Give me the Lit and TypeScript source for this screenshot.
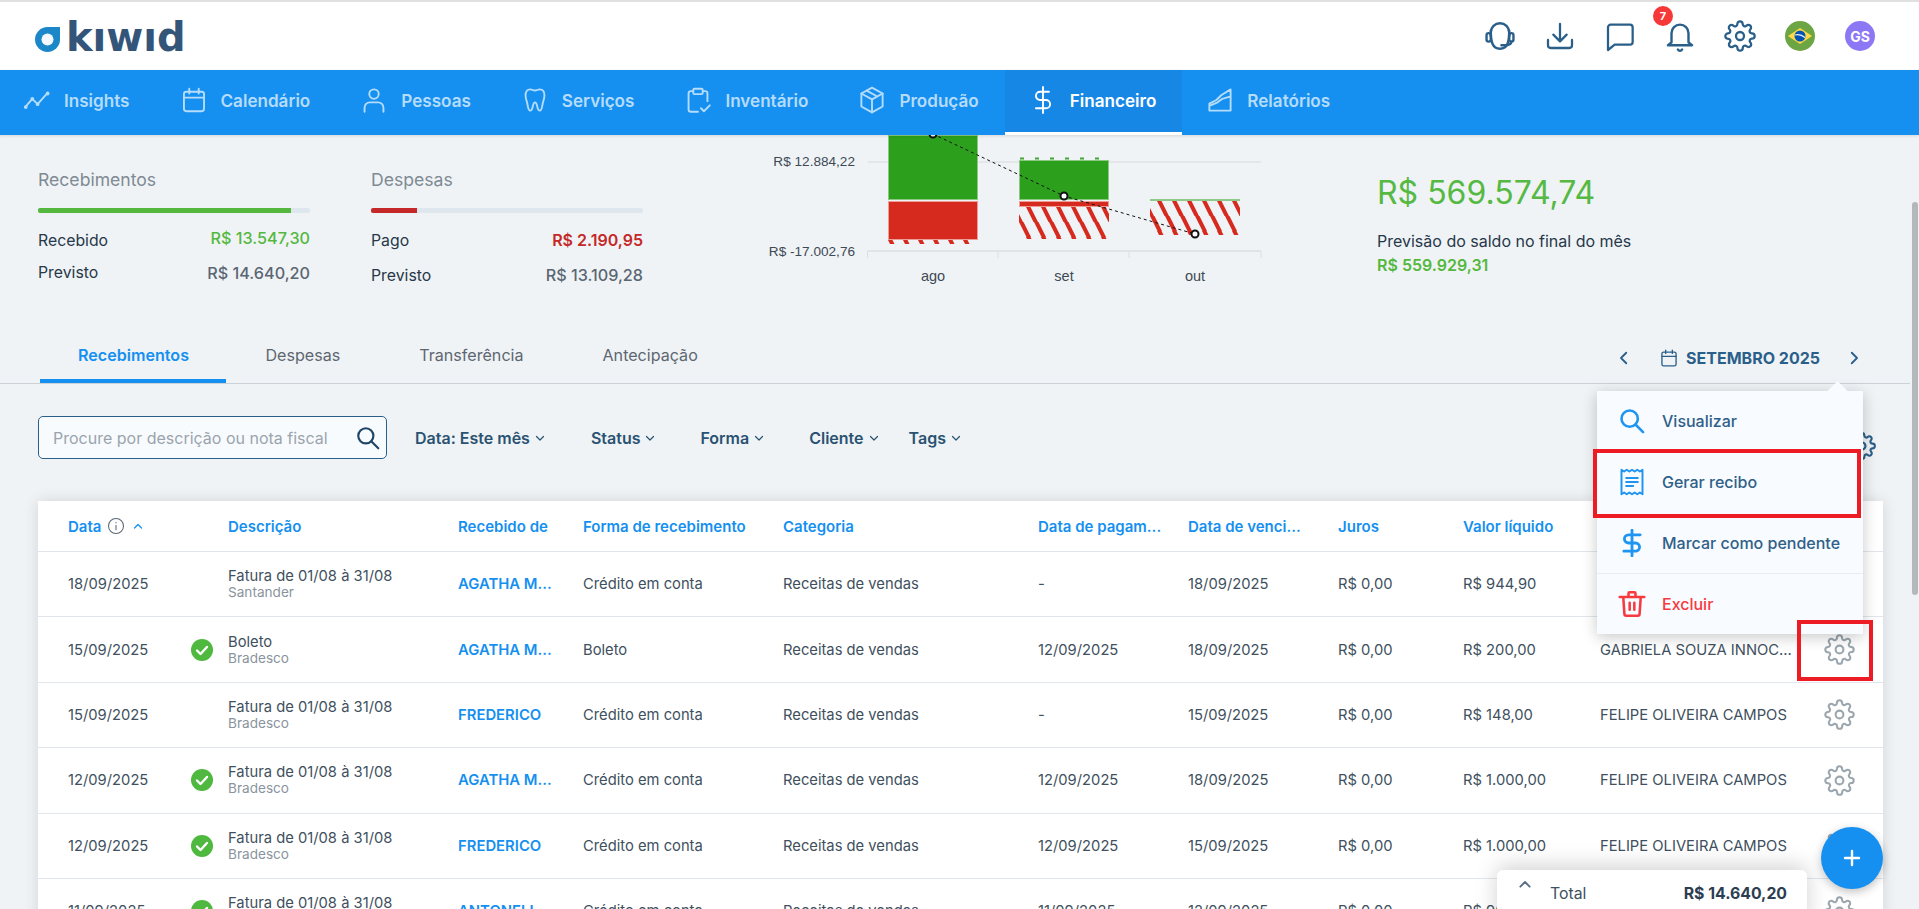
import { LitElement, html, css, svg } from "lit";
import { customElement } from "lit/decorators.js";

const ic = (cls: string, body: unknown, vb = "0 0 24 24") =>
  html`<svg class="ic ${cls}" viewBox=${vb} fill="none" stroke="currentColor" stroke-width="1.6" stroke-linecap="round" stroke-linejoin="round">${body}</svg>`;

const gearPaths = svg`<circle cx="12" cy="12" r="3"/><path d="M19.4 15a1.65 1.65 0 0 0 .33 1.82l.06.06a2 2 0 0 1 0 2.83 2 2 0 0 1-2.83 0l-.06-.06a1.65 1.65 0 0 0-1.82-.33 1.65 1.65 0 0 0-1 1.51V21a2 2 0 0 1-2 2 2 2 0 0 1-2-2v-.09A1.65 1.65 0 0 0 9 19.4a1.65 1.65 0 0 0-1.82.33l-.06.06a2 2 0 0 1-2.83 0 2 2 0 0 1 0-2.83l.06-.06a1.65 1.65 0 0 0 .33-1.82 1.65 1.65 0 0 0-1.51-1H3a2 2 0 0 1-2-2 2 2 0 0 1 2-2h.09A1.65 1.65 0 0 0 4.6 9a1.65 1.65 0 0 0-.33-1.82l-.06-.06a2 2 0 0 1 0-2.83 2 2 0 0 1 2.83 0l.06.06a1.65 1.65 0 0 0 1.82.33H9a1.65 1.65 0 0 0 1-1.51V3a2 2 0 0 1 2-2 2 2 0 0 1 2 2v.09a1.65 1.65 0 0 0 1 1.51 1.65 1.65 0 0 0 1.82-.33l.06-.06a2 2 0 0 1 2.83 0 2 2 0 0 1 0 2.83l-.06.06a1.65 1.65 0 0 0-.33 1.82V9a1.65 1.65 0 0 0 1.51 1H21a2 2 0 0 1 2 2 2 2 0 0 1-2 2h-.09a1.65 1.65 0 0 0-1.51 1z"/>`;

const calPaths = svg`<rect x="3.5" y="5" width="17" height="16.5" rx="2"/><path d="M3.5 10h17M8 2.5v4M16 2.5v4"/>`;

const navItems = [
  { t: "Insights", i: svg`<path d="M2 18l6-7 4.5 4.5L21 6"/><circle cx="2.5" cy="18" r=".8"/><circle cx="8" cy="11" r=".8"/><circle cx="12.5" cy="15.5" r=".8"/><circle cx="21" cy="6.5" r=".8"/>` },
  { t: "Calendário", i: calPaths },
  { t: "Pessoas", i: svg`<circle cx="12" cy="7" r="4"/><path d="M4 22v-3.5A4.5 4.5 0 0 1 8.500 14h7a4.5 4.5 0 0 1 4.500 4.500V22"/>` },
  { t: "Serviços", i: svg`<path d="M8 3c1.700 0 2.500 1 4 1s2.300-1 4-1c2.800 0 4 2.200 4 5 0 3-1 4.500-1.500 7-.5 3-.8 6-2.500 6s-1.800-2.200-2.200-4c-.3-1.300-.8-3-1.800-3s-1.500 1.700-1.800 3c-.4 1.800-.5 4-2.200 4s-2-3-2.500-6C5 12.500 4 11 4 8c0-2.800 1.200-5 4-5z"/>` },
  { t: "Inventário", i: svg`<path d="M8 4.500H6a2 2 0 0 0-2 2V20a2 2 0 0 0 2 2h6M16 4.500h2a2 2 0 0 1 2 2V13"/><rect x="8" y="2.500" width="8" height="4.500" rx="1"/><path d="M14.500 19l2.500 2.500 5-5"/>` },
  { t: "Produção", i: svg`<path d="M12 1.500l9 5v11l-9 5-9-5v-11z"/><path d="M3 6.500l9 5 9-5M12 11.500v11M7.500 4l9 5"/>` },
  { t: "Financeiro", i: svg`<path d="M12 1v22M17 5H9.500a3.500 3.500 0 0 0 0 7h5a3.500 3.500 0 0 1 0 7H6"/>`, active: true },
  { t: "Relatórios", i: svg`<path d="M3 21h18V3M3 21v-6l6-3 4-4 8-5M3 17l7-3 4-3 7-2"/>` },
];

type Row = [string, boolean, string, string, string, string, string, string, string, string, string];
const F = "Fatura de 01/08 à 31/08", C = "Crédito em conta", FE = "FELIPE OLIVEIRA CAMPOS";
const rows: Row[] = [
  ["18/09/2025", false, F, "Santander", "AGATHA M...", C, "-", "18/09/2025", "R$ 944,90", FE, ""],
  ["15/09/2025", true, "Boleto", "Bradesco", "AGATHA M...", "Boleto", "12/09/2025", "18/09/2025", "R$ 200,00", "GABRIELA SOUZA INNOC...", ""],
  ["15/09/2025", false, F, "Bradesco", "FREDERICO", C, "-", "15/09/2025", "R$ 148,00", FE, ""],
  ["12/09/2025", true, F, "Bradesco", "AGATHA M...", C, "12/09/2025", "18/09/2025", "R$ 1.000,00", FE, ""],
  ["12/09/2025", true, F, "Bradesco", "FREDERICO", C, "12/09/2025", "15/09/2025", "R$ 1.000,00", FE, ""],
  ["11/09/2025", true, F, "Bradesco", "ANTONELL...", C, "11/09/2025", "12/09/2025", "R$ 900,00", FE, ""],
];

@customElement("app-root")
export class AppRoot extends LitElement {
  static styles = css`
    :host { display: block; position: relative; height: 909px; overflow: hidden; background: #f0f3f5; font-family: Inter, "Liberation Sans", sans-serif; color: #2c3e50; }
    .ic { display: block; flex: none; width: 24px; height: 24px; }
    .strip { height: 2px; background: #e0e0e0; }
    .head { height: 68px; background: #fff; display: flex; align-items: center; justify-content: space-between; padding-right: 29px; }
    .logo { display: flex; align-items: flex-end; gap: 6px; margin-left: 35px; padding-top: 2px; }
    .logo svg { width: 25px; height: 25px; display: block; margin-bottom: 1px; }
    .logo span { font-family: "DejaVu Sans", sans-serif; font-weight: 700; font-size: 40px; line-height: 31px; color: #34557a; }
    .tools { display: flex; align-items: center; color: #2a5f8a; height: 34px; }
    .slot { width: 60px; display: flex; justify-content: center; align-items: center; position: relative; }
    .tool { width: 32px; height: 32px; stroke-width: 1.700; }
    .tool.lg { width: 34px; height: 34px; }
    .badge { position: absolute; left: 3px; top: -13px; width: 20px; height: 20px; border-radius: 50%; background: #f73838; color: #fff; font-size: 11px; font-weight: 700; display: grid; place-items: center; }
    .flag { width: 30px; height: 30px; }
    .avatar { width: 30px; height: 30px; border-radius: 50%; background: #8c78f5; color: #fff; font-size: 14px; font-weight: 700; display: grid; place-items: center; }
    .nav { height: 65px; background: #1590f0; display: flex; margin-left: -1px; position: relative; z-index: 2; box-shadow: 0 1px 3px rgba(0,0,0,.12); }
    .nav a { display: flex; align-items: center; gap: 15px; padding: 0 26px 5px; color: #b5dcfb; font-size: 17.100px; font-weight: 600; box-sizing: border-box; }
    .nav a.on { background: #1787e6; color: #fff; border-bottom: 3px solid #fff; padding-bottom: 2px; }
    .nav .ic { transform: scale(1.18); }
    .body { display: flex; height: 774px; }
    .main { flex: 1; min-width: 0; }
    .sbar { width: 9px; padding-left: 2px; box-sizing: border-box; }
    .thumb { margin-top: 67px; height: 393px; width: 6px; border-radius: 3px; background: #b3b8bb; }
    .stats { height: 204px; display: flex; padding-left: 38px; }
    .stat { width: 272px; padding-top: 35px; box-sizing: border-box; }
    .stat + .stat { margin-left: 61px; }
    .st { font-size: 17.600px; line-height: 20px; color: #7e8a94; }
    .bar { height: 5px; margin-top: 18px; background: #dfe7ee; border-radius: 2px; overflow: hidden; }
    .fill { height: 100%; }
    .sr { display: flex; justify-content: space-between; align-items: center; font-size: 15.800px; line-height: 20px; margin-top: 12px; color: #26384a; }
    .sr:nth-of-type(3) { margin-top: 18px; }
    .sr b { font-weight: 500; font-size: 16.200px; color: #5a6673; }
    .sr b.g { color: #54b83f; }
    .sr b.r { color: #c42828; font-weight: 600; font-size: 16px; }
    .up { margin-top: -6px; }
    .despesas .sr { margin-top: 15px; }
    .despesas .sr:nth-of-type(3) { margin-top: 18px; }
    .despesas .sr b { margin-top: -2px; }
    .chart { width: 520px; height: 165px; margin-left: 117px; display: block; flex: none; }
    .chart text { font-family: "Liberation Sans", Arial, sans-serif; fill: #3d4a55; }
    .bal { margin-left: 97px; padding-top: 37px; }
    .bal .big { font-size: 32px; line-height: 42px; color: #55b944; font-weight: 400; }
    .bal .lbl { font-size: 16px; line-height: 20px; margin-top: 17px; color: #26384a; }
    .bal .sub { font-size: 16px; line-height: 20px; margin-top: 4px; color: #54b83f; font-weight: 600; }
    .tabs { height: 44px; display: flex; align-items: stretch; border-bottom: 1px solid #ccd3d8; padding-left: 40px; }
    .tab { padding: 0 39.500px 13px; font-size: 16.100px; color: #5d6771; display: flex; align-items: center; box-sizing: border-box; height: 44px; }
    .tab.on { color: #1590f0; font-weight: 600; border-bottom: 4px solid #1590f0; padding: 0 37px 9px 38px; }
    .month { margin-left: auto; display: flex; align-items: center; color: #2a5f8a; padding-bottom: 6px; height: 38px; padding-right: 47px; }
    .month .chev { width: 18px; height: 18px; stroke-width: 2.400; }
    .month .cal { width: 20px; height: 20px; margin-left: 26px; }
    .month span { font-size: 16px; font-weight: 700; margin: 0 25px 0 7px; }
    .filters { height: 43px; margin-top: 32px; display: flex; align-items: center; padding-left: 38px; position: relative; }
    .search { width: 349px; height: 43px; box-sizing: border-box; border: 1px solid #2a5f8a; border-radius: 5px; background: #f8fbfd; display: flex; align-items: center; justify-content: space-between; padding: 0 5px 0 14px; color: #9aa4ad; font-size: 16px; }
    .search .ic { color: #1f4668; width: 26px; height: 26px; stroke-width: 2; }
    .fl { display: flex; align-items: center; gap: 4px; font-size: 16px; font-weight: 600; color: #2a5272; }
    .fl .ic { width: 12px; height: 12px; stroke-width: 2.400; }
    .fl1 { margin-left: 28px; } .fl2 { margin-left: 45px; } .fl3 { margin-left: 44px; } .fl4 { margin-left: 44px; } .fl5 { margin-left: 29px; }
    .fgear { position: absolute; left: 1848px; top: 16px; width: 28px; height: 28px; stroke-width: 1.800; color: #2a5f8a; }
    .card { margin: 42px 27px 0 38px; background: #fff; box-shadow: 0 0 14px rgba(0,0,0,.12); height: 500px; overflow: hidden; }
    .row { display: grid; grid-template-columns: 30px 118px 42px 230px 125px 200px 255px 150px 150px 125px 137px 210px 1fr; align-items: center; height: 65.400px; box-sizing: border-box; border-bottom: 1px solid #e0e6eb; font-size: 14.750px; color: #40505e; }
    .row > * { white-space: nowrap; }
    .row.hd { height: 51px; color: #1590f0; font-weight: 600; font-size: 15px; }
    .hdata { grid-column: 2 / 4; display: flex; align-items: center; gap: 6px; }
    .hdata .ic { width: 18px; height: 18px; color: #5a6673; stroke-width: 1.400; }
    .hdata .car { width: 12px; height: 12px; color: #1590f0; stroke-width: 2.600; margin-left: 1px; }
    .c2 { grid-column: 4; } .c3 { grid-column: 5; } .c4 { grid-column: 6; } .c5 { grid-column: 7; } .c6 { grid-column: 8; } .c7 { grid-column: 9; } .c8 { grid-column: 10; } .c9 { grid-column: 11; } .c10 { grid-column: 12; }
    .d1 { grid-column: 2; }
    .chk { grid-column: 3; margin-left: 5px; width: 22px; height: 22px; }
    .desc { line-height: 16px; grid-column: 4; color: #40505e; }
    .desc small { display: block; font-size: 13.600px; color: #8a949d; }
    .who { color: #1590f0; font-weight: 600; font-size: 14.850px; }
    .gear { color: #9ba6ae; width: 31px; height: 31px; grid-column: 13; stroke-width: 1.600; margin-left: 13.500px; }
    .menu { position: absolute; left: 1597px; top: 391px; width: 266px; height: 243px; background: #f8fbff; box-shadow: 0 3px 14px rgba(0,0,0,.22); z-index: 3; display: grid; grid-template-rows: repeat(4, 1fr); color: #2f6088; font-size: 16px; font-weight: 500; }
    .menu::before { content: ""; position: absolute; left: 233px; top: -7px; width: 15px; height: 15px; background: #f8fbff; transform: rotate(45deg); }
    .mi { display: flex; align-items: center; padding-left: 21px; gap: 16px; position: relative; }
    .mi .ic { color: #1f95f2; width: 28px; height: 28px; stroke-width: 2.200; }
    .mi.ex { color: #f73a3f; border-top: 1px solid #e8edf2; }
    .mi.ex .ic { color: #f73a3f; }
    .rbox { position: absolute; border: 4px solid #ed1c24; box-sizing: border-box; z-index: 4; }
    .rb1 { left: 1593px; top: 449px; width: 268px; height: 69px; }
    .rb2 { left: 1797px; top: 620px; width: 76px; height: 61px; }
    .total { position: absolute; left: 1497px; top: 870px; width: 310px; height: 60px; background: #fff; border-radius: 6px 6px 0 0; box-shadow: 0 -4px 22px rgba(0,0,0,.18); z-index: 3; display: flex; align-items: flex-start; padding: 15px 20px 0 16px; box-sizing: border-box; font-size: 15.800px; color: #40505e; }
    .total .ic { width: 24px; height: 16px; color: #5a6f85; stroke-width: 2.800; margin-top: -9px; }
    .total span { margin-left: 13px; line-height: 18px; }
    .total b { margin-left: auto; font-weight: 700; color: #2c3e50; line-height: 18px; }
    .fab { position: absolute; left: 1821px; top: 827px; width: 62px; height: 62px; border-radius: 50%; background: #1590f0; color: #fff; display: grid; place-items: center; box-shadow: 0 3px 10px rgba(0,0,0,.25); z-index: 4; }
    .fab .ic { stroke-width: 2.400; }
  `;

  private hatchDef(id: string, x: number, y: number) {
    return svg`<pattern id=${id} width="15" height="30" patternUnits="userSpaceOnUse" x=${x} y=${y}>
      <polygon points="7,0 11.500,0 19,15 14.500,15" fill="#d62a1e"/>
      <polygon points="-8,0 -3.500,0 4,15 -0.500,15" fill="#d62a1e"/>
      <polygon points="0,15 4.500,15 12,30 7.500,30" fill="#d62a1e"/>
      <polygon points="15,15 19.500,15 27,30 22.500,30" fill="#d62a1e"/>
    </pattern>`;
  }

  private chart() {
    const ox = 760;
    const bars = [
      { x: 888, gy: 0, gh: 64, ry: 66, rh: 38 },
      { x: 1019, gy: 25, gh: 39, ry: 66, rh: 5 },
    ];
    return html`<svg class="chart" viewBox="0 0 520 165">
      <defs>
        ${this.hatchDef("hA", 128, 90)}
        ${this.hatchDef("hS", 259, 72)}
        ${this.hatchDef("hO", 390, 66)}
        <pattern id="dashG" width="15" height="3" patternUnits="userSpaceOnUse" x=${1019 - ox} y="22">
          <rect x="1" y="0.500" width="4" height="2" fill="#3fa832"/>
        </pattern>
      </defs>
      <line x1=${867.5 - ox} y1="27" x2=${1261 - ox} y2="27" stroke="#e0e2e4" stroke-width="1.500"/>
      <line x1=${867.5 - ox} y1="116" x2=${1261 - ox} y2="116" stroke="#dcdee0" stroke-width="1.500"/>
      ${[867.5, 998, 1129, 1261].map((x) => svg`<line x1=${x - ox} y1="116" x2=${x - ox} y2="123" stroke="#dcdee0" stroke-width="1"/>`)}
      ${bars.map((b) => svg`
        <rect x=${b.x - ox + 0.5} y=${b.gy + 0.5} width="89" height=${b.gh} fill="#2ca01c" stroke="#8bc983" stroke-width="1"/>
        <rect x=${b.x - ox + 0.5} y=${b.ry + 0.5} width="89" height=${b.rh} fill="#d62a1e" stroke="#ee9c96" stroke-width="1"/>
      `)}
      <rect x="128" y="105" width="90" height="4" fill="url(#hA)"/>
      <rect x="259" y="72" width="90" height="32" fill="url(#hS)"/>
      <rect x=${1019 - ox} y="22" width="90" height="3" fill="url(#dashG)"/>
      <rect x="390" y="66" width="90" height="34" fill="url(#hO)"/>
      <line x1="390" y1="65" x2="480" y2="65" stroke="#2ca01c" stroke-width="1"/>
      <polyline points="${933 - ox},-1 ${1064 - ox},61 ${1195 - ox},99" fill="none" stroke="#111" stroke-width="1" stroke-dasharray="3 3"/>
      ${[[933, -1], [1064, 61], [1195, 99]].map(([x, y]) => svg`<circle cx=${x - ox} cy=${y} r="3.500" fill="#fff" stroke="#111" stroke-width="2"/>`)}
      <text x="95" y="31" text-anchor="end" font-size="13.600">R$ 12.884,22</text>
      <text x="95" y="121" text-anchor="end" font-size="13.600">R$ -17.002,76</text>
      <text x=${933 - ox} y="146" text-anchor="middle" font-size="14.500">ago</text>
      <text x=${1064 - ox} y="146" text-anchor="middle" font-size="14.500">set</text>
      <text x=${1195 - ox} y="146" text-anchor="middle" font-size="14.500">out</text>
    </svg>`;
  }

  render() {
    return html`
      <div class="strip"></div>
      <div class="head">
        <div class="logo" aria-label="kiwid">
          <svg viewBox="0 0 25 25"><path d="M25 0v12.500A12.500 12.500 0 1 1 12.500 0z" fill="#1b87c9"/><circle cx="12.500" cy="12.500" r="6" fill="#f2f8fd"/></svg>
          <span>kıwıd</span>
        </div>
        <div class="tools">
          <div class="slot">${ic("tool lg", svg`<path d="M5.500 12V9.500a6.500 6.500 0 0 1 13 0V12"/><path d="M5.500 8c0 8 1 13 6.500 13s6.500-5 6.500-13"/><rect x="2.500" y="10" width="3" height="6" rx="1.500"/><rect x="18.500" y="10" width="3" height="6" rx="1.500"/><path d="M20 16c0 2-2 2.500-5 2.500h-2"/>`)}</div>
          <div class="slot">${ic("tool", svg`<path d="M12 3v13M7 11l5 5 5-5"/><path d="M3 15v4a2 2 0 0 0 2 2h14a2 2 0 0 0 2-2v-4"/>`)}</div>
          <div class="slot">${ic("tool", svg`<path d="M5 3.500h14.500a2 2 0 0 1 2 2v11a2 2 0 0 1-2 2H8l-5 4V5.500a2 2 0 0 1 2-2z"/>`)}</div>
          <div class="slot">${ic("tool lg", svg`<path d="M6 16.500V10a6 6 0 0 1 12 0v6.500l2.500 2h-17z"/><path d="M10.500 21.500a1.700 1.700 0 0 0 3 0"/>`)}<div class="badge">7</div></div>
          <div class="slot">${ic("tool", gearPaths)}</div>
          <div class="slot"><svg class="flag" viewBox="0 0 30 30"><circle cx="15" cy="15" r="15" fill="#6da544"/><polygon points="15,7 27,15 15,23 3,15" fill="#ffda44"/><circle cx="15" cy="15" r="5.500" fill="#0052b4"/><path d="M10 14c3-1 7 0 10 2.500" stroke="#f0f0f0" stroke-width="1.200" fill="none"/></svg></div>
          <div class="slot"><div class="avatar">GS</div></div>
        </div>
      </div>
      <div class="nav">
        ${navItems.map((n) => html`<a class=${n.active ? "on" : ""}>${ic("", n.i)}${n.t}</a>`)}
      </div>
      <div class="body">
        <div class="main">
          <div class="stats">
            <div class="stat">
              <div class="st">Recebimentos</div>
              <div class="bar"><div class="fill" style="width:93%;background:#54b83f"></div></div>
              <div class="sr"><span>Recebido</span><b class="g up">R$ 13.547,30</b></div>
              <div class="sr"><span>Previsto</span><b>R$ 14.640,20</b></div>
            </div>
            <div class="stat despesas">
              <div class="st">Despesas</div>
              <div class="bar"><div class="fill" style="width:17%;background:#c42828"></div></div>
              <div class="sr"><span>Pago</span><b class="r">R$ 2.190,95</b></div>
              <div class="sr"><span>Previsto</span><b>R$ 13.109,28</b></div>
            </div>
            ${this.chart()}
            <div class="bal">
              <div class="big">R$ 569.574,74</div>
              <div class="lbl">Previsão do saldo no final do mês</div>
              <div class="sub">R$ 559.929,31</div>
            </div>
          </div>
          <div class="tabs">
            <div class="tab on">Recebimentos</div>
            <div class="tab">Despesas</div>
            <div class="tab">Transferência</div>
            <div class="tab">Antecipação</div>
            <div class="month">
              ${ic("chev", svg`<path d="M15 5l-7 7 7 7"/>`)}
              ${ic("cal", calPaths)}
              <span>SETEMBRO 2025</span>
              ${ic("chev", svg`<path d="M9 5l7 7-7 7"/>`)}
            </div>
          </div>
          <div class="filters">
            <div class="search">Procure por descrição ou nota fiscal ${ic("", svg`<circle cx="10" cy="10" r="7"/><path d="M15 15l6.500 6.500"/>`)}</div>
            ${["Data: Este mês", "Status", "Forma", "Cliente", "Tags"].map((f, i) => html`<div class="fl fl${i + 1}">${f}${ic("", svg`<path d="M5 9l7 7 7-7"/>`)}</div>`)}
            ${ic("fgear", gearPaths)}
          </div>
          <div class="card">
            <div class="row hd">
              <div class="hdata">Data ${ic("", svg`<circle cx="12" cy="12" r="10"/><path d="M12 11v6M12 7v.5"/>`)}${ic("car", svg`<path d="M5 16l7-7 7 7"/>`)}</div>
              <div class="c2">Descrição</div><div class="c3">Recebido de</div><div class="c4">Forma de recebimento</div><div class="c5">Categoria</div>
              <div class="c6">Data de pagam...</div><div class="c7">Data de venci...</div><div class="c8">Juros</div><div class="c9">Valor líquido</div>
            </div>
            ${rows.map((r) => html`<div class="row">
              <div class="d1">${r[0]}</div>
              ${r[1] ? html`<svg class="chk" viewBox="0 0 22 22"><circle cx="11" cy="11" r="11" fill="#4fb83f"/><path d="M6 11.500l3.500 3.500 6.500-7" fill="none" stroke="#fff" stroke-width="2.400" stroke-linecap="round" stroke-linejoin="round"/></svg>` : ""}
              <div class="desc">${r[2]}<small>${r[3]}</small></div>
              <div class="c3 who">${r[4]}</div>
              <div class="c4">${r[5]}</div>
              <div class="c5">Receitas de vendas</div>
              <div class="c6">${r[6]}</div>
              <div class="c7">${r[7]}</div>
              <div class="c8">R$ 0,00</div>
              <div class="c9">${r[8]}</div>
              <div class="c10">${r[9]}</div>
              ${ic("gear", gearPaths)}
            </div>`)}
          </div>
        </div>
        <div class="sbar"><div class="thumb"></div></div>
      </div>
      <div class="menu">
        <div class="mi">${ic("", svg`<circle cx="10" cy="10" r="7"/><path d="M15 15l6.500 6.500"/>`)}Visualizar</div>
        <div class="mi">${ic("", svg`<path d="M3 1.500l2.250 1.500 2.250-1.500 2.250 1.500 2.250-1.500 2.250 1.500 2.250-1.500 2.250 1.500 2.250-1.500v21l-2.250-1.500-2.250 1.500-2.250-1.500-2.250 1.500-2.250-1.500-2.250 1.500-2.250-1.500-2.250 1.500z" stroke-width="1.700"/><path d="M7 8.500h10M7 12h10M7 15.500h6" stroke-width="1.700"/>`)}Gerar recibo</div>
        <div class="mi">${ic("", svg`<path d="M12 1v22M19 5H9a3.500 3.500 0 0 0 0 7h6a3.500 3.500 0 0 1 0 7H5" stroke-width="2.400"/>`)}Marcar como pendente</div>
        <div class="mi ex">${ic("", svg`<path d="M1.500 6h21M9 6V3a1 1 0 0 1 1-1h4a1 1 0 0 1 1 1v3M4.500 6l1 14.500a1.500 1.500 0 0 0 1.500 1.500h10a1.500 1.500 0 0 0 1.500-1.500L19.500 6M10 11v6M14 11v6"/>`)}Excluir</div>
      </div>
      <div class="rbox rb1"></div>
      <div class="rbox rb2"></div>
      <div class="total">${ic("", svg`<path d="M5 16l7-7 7 7"/>`)}<span>Total</span><b>R$ 14.640,20</b></div>
      <div class="fab">${ic("", svg`<path d="M12 5v14M5 12h14"/>`)}</div>
    `;
  }
}
